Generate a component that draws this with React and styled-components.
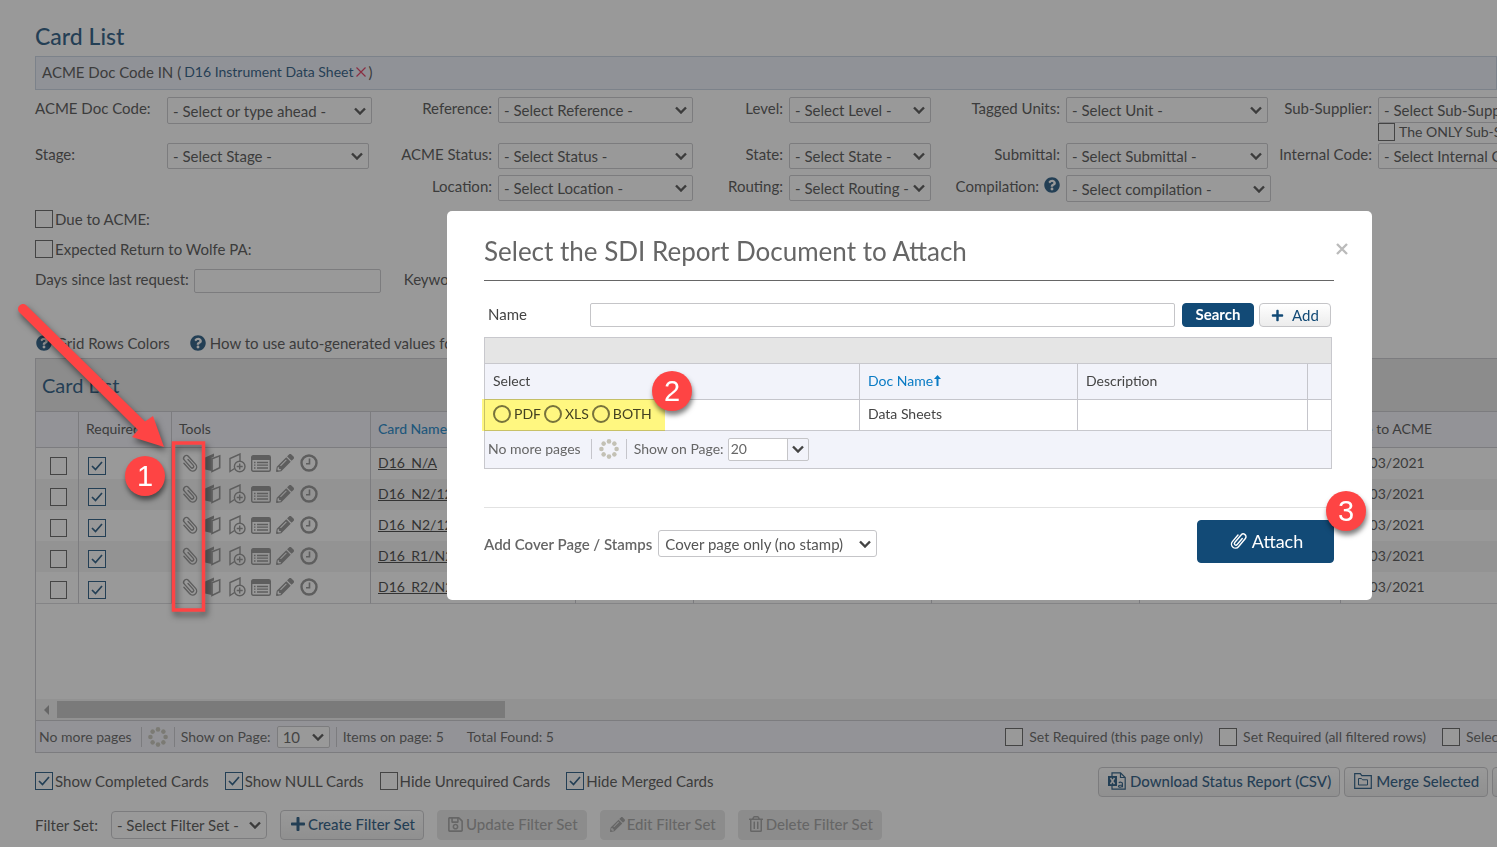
import React from 'react'
import styled, { createGlobalStyle, css } from 'styled-components'
import { FaQuestionCircle, FaPencilAlt, FaPlus, FaRegSave, FaRegTrashAlt } from 'react-icons/fa'

const tools = [PaperclipIcon, BookIcon, MapPlusIcon, ListIcon, FaPencilAlt, ClockIcon]

const cards = [
    { name: 'D16_N/A', date: '03/03/2021' },
    { name: 'D16_N2/12', date: '03/03/2021' },
    { name: 'D16_N2/12', date: '03/03/2021' },
    { name: 'D16_R1/N2', date: '03/03/2021' },
    { name: 'D16_R2/N2', date: '03/03/2021' },
]

function PaperclipIcon({ flip }) {
    return (
        <svg viewBox="0 0 24 24" width="19" height="19" fill="none" stroke="currentColor" strokeWidth="1.8" strokeLinecap="round">
            <g transform={flip ? 'rotate(40 12 12)' : 'rotate(-42 12 12)'}>
                <path d="M7 7v11a5 5 0 0 0 10 0V4.500a3.500 3.500 0 0 0-7 0v12.500a2 2 0 0 0 4 0V7" />
            </g>
        </svg>
    )
}

function BookIcon() {
    return (
        <svg viewBox="0 0 16 20" width="16" height="20">
            <path d="M0 4.500 9 .5v3L6.500 4.800V18L0 16.500z" fill="currentColor" />
            <path d="M7 5.800 14.700 2.800v12L7 18.500z" fill="none" stroke="currentColor" strokeWidth="1.600" />
        </svg>
    )
}

function MapPlusIcon() {
    return (
        <svg viewBox="0 0 17 20" width="17" height="20" fill="none" stroke="currentColor" strokeWidth="1.400">
            <path d="M5.500 15.500 1 18.500V5.500l10-4.500v7" />
            <circle cx="10.700" cy="13.500" r="5.300" />
            <path d="M10.700 10.500v6M7.700 13.500h6" />
        </svg>
    )
}

function ListIcon() {
    return (
        <svg viewBox="0 0 20 17" width="20" height="17">
            <rect x=".7" y=".7" width="18.600" height="15.600" rx="1.500" fill="none" stroke="currentColor" strokeWidth="1.400" />
            <path d="M1 1h18v4H1z" fill="currentColor" />
            <path d="M3 7.500h1.500M3 10.200h1.500M3 13h1.500M6 7.500h11M6 10.200h11M6 13h11" stroke="currentColor" strokeWidth="1.300" />
        </svg>
    )
}

function ClockIcon() {
    return (
        <svg viewBox="0 0 18 18" width="18" height="18" fill="none" stroke="currentColor">
            <circle cx="9" cy="9" r="7.500" strokeWidth="2.400" />
            <path d="M9.500 4.500v5.200H6" strokeWidth="1.600" />
        </svg>
    )
}

function ExcelIcon() {
    return (
        <svg viewBox="0 0 18 18" width="18" height="18" fill="none" stroke="currentColor" strokeWidth="1.200">
            <path d="M4 4V.8h8.500l4.700 4.700v11.700H4V14" />
            <path d="M12.500 1v4.500H17" />
            <path d="M0 4h9v10H0z" fill="currentColor" stroke="none" />
            <path d="m2.500 6 4 6m0-6-4 6" stroke="#f2f2f2" strokeWidth="1.500" />
            <path d="M10.800 10.800c1-.9 3.600-.9 3.600.8v3.600m0-2.200c-2 0-3.900 0-3.900 1.200 0 1.500 3 1.300 3.900-.2" />
        </svg>
    )
}

function FolderIcon() {
    return (
        <svg viewBox="0 0 18 16" width="18" height="16" fill="none" stroke="currentColor" strokeWidth="1.200">
            <path d="M.7 15.300V.7h5.600l1.500 2h9.500v12.600z" />
            <path d="M4.500 12V5.500h3l1 1.300h5V12z" strokeWidth="1" />
        </svg>
    )
}

function Spinner() {
    const dots = [0, 45, 90, 135, 180, 225, 270, 315]
    return (
        <svg viewBox="0 0 20 20" width="20" height="20" fill="#c3c1b5">
            {dots.map(angle => (
                <circle key={angle} cx="10" cy="2.400" r="2.300" transform={`rotate(${angle} 10 10)`} />
            ))}
        </svg>
    )
}

const Dropdown = ({ id, text, ...rest }) => (
    <Select id={id} {...rest}>
        <option>{text}</option>
    </Select>
)

const FilterPanel = () => (
    <Filters>
        <Label htmlFor="docCode">ACME Doc Code:</Label>
        <Dropdown id="docCode" text="- Select or type ahead -" $tall />
        <Label htmlFor="reference" $right>Reference:</Label>
        <Dropdown id="reference" text="- Select Reference -" />
        <Label htmlFor="level" $right>Level:</Label>
        <Dropdown id="level" text="- Select Level -" />
        <Label htmlFor="units" $right>Tagged Units:</Label>
        <Dropdown id="units" text="- Select Unit -" $inset />
        <Label htmlFor="supplier" $right>Sub-Supplier:</Label>
        <WideField>
            <Dropdown id="supplier" text="- Select Sub-Supplier -" />
            <OnlyLabel><Check $small />The ONLY Sub-Supplier</OnlyLabel>
        </WideField>

        <Label htmlFor="stage">Stage:</Label>
        <Dropdown id="stage" text="- Select Stage -" $inset />
        <Label htmlFor="status" $right>ACME Status:</Label>
        <Dropdown id="status" text="- Select Status -" />
        <Label htmlFor="state" $right>State:</Label>
        <Dropdown id="state" text="- Select State -" />
        <Label htmlFor="submittal" $right>Submittal:</Label>
        <Dropdown id="submittal" text="- Select Submittal -" $inset />
        <Label htmlFor="internal" $right>Internal Code:</Label>
        <WideField>
            <Dropdown id="internal" text="- Select Internal Code -" />
        </WideField>

        <LocationLabel htmlFor="location" $right>Location:</LocationLabel>
        <Dropdown id="location" text="- Select Location -" />
        <Label htmlFor="routing" $right>Routing:</Label>
        <Dropdown id="routing" text="- Select Routing -" />
        <Label htmlFor="compilation" $right>Compilation: <HelpIcon /></Label>
        <Dropdown id="compilation" text="- Select compilation -" $tall />
    </Filters>
)

const CardGrid = () => (
    <Panel>
        <PanelTitle>Card List</PanelTitle>
        <PanelBody>
            <CardTable>
                <colgroup>
                    <Col $w={43} /><Col $w={93} /><Col $w={199} /><Col $w={205} /><Col $w={118} />
                    <Col $w={238} /><Col $w={208} /><Col $w={201} /><Col />
                </colgroup>
                <thead>
                    <tr>
                        <th />
                        <th>Required</th>
                        <th>Tools</th>
                        <th><SortLink href="#name" $bold>Card Name(s)</SortLink></th>
                        <th /><th /><th /><th />
                        <th>Due to ACME</th>
                    </tr>
                </thead>
                <tbody>
                    {cards.map((card, i) => (
                        <tr key={i}>
                            <CheckCell><Check aria-label="Select row" $small /></CheckCell>
                            <td><Check aria-label="Required" defaultChecked /></td>
                            <td>
                                <Tools>
                                    {tools.map((Icon, n) => (
                                        <ToolButton key={n} aria-label="Tool"><Icon /></ToolButton>
                                    ))}
                                </Tools>
                            </td>
                            <td><CardLink href="#card">{card.name}</CardLink></td>
                            <td /><td /><td /><td />
                            <td>{card.date}</td>
                        </tr>
                    ))}
                </tbody>
            </CardTable>
        </PanelBody>
        <ScrollBar>
            <ScrollArrow />
            <ScrollThumb />
        </ScrollBar>
        <Pager>
            <PagerLeft>
                <PagerText>No more pages</PagerText>
                <Divider />
                <Spinner />
                <Divider />
                <label htmlFor="pageSize">Show on Page:</label>
                <PageSize id="pageSize"><option>10</option></PageSize>
                <Divider />
                <span>Items on page: 5</span>
                <Total>Total Found: 5</Total>
            </PagerLeft>
            <PagerOption><Check />Set Required (this page only)</PagerOption>
            <Divider />
            <PagerOption><Check />Set Required (all filtered rows)</PagerOption>
            <Divider />
            <PagerOption><Check />Selected</PagerOption>
        </Pager>
    </Panel>
)

const AttachModal = () => (
    <Modal role="dialog" aria-labelledby="modalTitle">
        <ModalHeader>
            <ModalTitle id="modalTitle">Select the SDI Report Document to Attach</ModalTitle>
            <CloseButton aria-label="Close">
                <svg viewBox="0 0 12 12" width="12" height="12" stroke="currentColor" strokeWidth="2.400">
                    <path d="m1 1 10 10M11 1 1 11" />
                </svg>
            </CloseButton>
        </ModalHeader>
        <SearchRow>
            <NameLabel htmlFor="name">Name</NameLabel>
            <TextInput id="name" />
            <SearchButton>Search</SearchButton>
            <AddButton><FaPlus size={13} />Add</AddButton>
        </SearchRow>
        <DocPanel>
            <DocStrip />
            <DocTable>
                <colgroup>
                    <Col $w={375} /><Col $w={218} /><Col $w={230} /><Col />
                </colgroup>
                <thead>
                    <tr>
                        <th>Select</th>
                        <th>
                            <SortLink href="#doc">
                                Doc Name
                                <svg viewBox="0 0 7 11" width="7" height="11" fill="currentColor">
                                    <path d="M3.500 0 7 4H4.500v7h-2V4H0z" />
                                </svg>
                            </SortLink>
                        </th>
                        <th>Description</th>
                        <th />
                    </tr>
                </thead>
                <tbody>
                    <tr>
                        <td>
                            <Formats>
                                <label><Radio name="format" />PDF</label>
                                <label><Radio name="format" />XLS</label>
                                <label><Radio name="format" />BOTH</label>
                                <Highlight />
                            </Formats>
                        </td>
                        <td>Data Sheets</td>
                        <td />
                        <td />
                    </tr>
                </tbody>
            </DocTable>
            <DocPager>
                <PagerText>No more pages</PagerText>
                <Divider />
                <Spinner />
                <Divider />
                <DocSizeLabel>
                    Show on Page:
                    <ComboSelect><option>20</option></ComboSelect>
                </DocSizeLabel>
            </DocPager>
        </DocPanel>
        <ModalFooter>
            <CoverLabel htmlFor="cover">Add Cover Page / Stamps</CoverLabel>
            <CoverSelect id="cover"><option>Cover page only (no stamp)</option></CoverSelect>
            <AttachButton><PaperclipIcon flip />Attach</AttachButton>
        </ModalFooter>
        <Badge $left={205} $top={160}>2</Badge>
        <Badge $left={879} $top={280}>3</Badge>
    </Modal>
)

const App = () => {
    return (
        <Page>
            <GlobalStyle />
            <Heading>Card List</Heading>
            <ActiveFilter>
                ACME Doc Code IN (
                <FilterLink href="#filter">D16 Instrument Data Sheet</FilterLink>
                <RemoveButton aria-label="Remove filter">
                    <svg viewBox="0 0 10 10" width="10" height="10" stroke="currentColor" strokeWidth="1.200">
                        <path d="m.5.5 9 9m0-9-9 9" />
                    </svg>
                </RemoveButton>)
            </ActiveFilter>
            <FilterPanel />
            <CheckRows>
                <CheckLabel><Check />Due to ACME:</CheckLabel>
                <CheckLabel><Check />Expected Return to Wolfe PA:</CheckLabel>
            </CheckRows>
            <DaysRow>
                <label htmlFor="days">Days since last request:</label>
                <DaysInput id="days" />
                <label htmlFor="keyword">Keywords:</label>
                <DaysInput id="keyword" />
            </DaysRow>
            <HelpRow>
                <HelpLink href="#colors"><HelpIcon />Grid Rows Colors</HelpLink>
                <HelpLink href="#values"><HelpIcon />How to use auto-generated values for</HelpLink>
            </HelpRow>
            <CardGrid />
            <OptionsRow>
                <Options>
                    <CheckLabel><Check defaultChecked />Show Completed Cards</CheckLabel>
                    <CheckLabel><Check defaultChecked />Show NULL Cards</CheckLabel>
                    <CheckLabel><Check />Hide Unrequired Cards</CheckLabel>
                    <CheckLabel><Check defaultChecked />Hide Merged Cards</CheckLabel>
                </Options>
                <Button $gap={4}><ExcelIcon />Download Status Report (CSV)</Button>
                <Button $gap={4}><FolderIcon />Merge Selected</Button>
                <Button aria-label="More"><FolderIcon /></Button>
            </OptionsRow>
            <FilterSetRow>
                <label htmlFor="filterSet">Filter Set:</label>
                <FilterSetSelect id="filterSet"><option>- Select Filter Set -</option></FilterSetSelect>
                <Button $gap={2}><FaPlus size={16} />Create Filter Set</Button>
                <Button $gap={2} disabled><FaRegSave size={17} />Update Filter Set</Button>
                <Button $gap={2} disabled><FaPencilAlt />Edit Filter Set</Button>
                <Button $gap={2} disabled><FaRegTrashAlt size={16} />Delete Filter Set</Button>
            </FilterSetRow>
            <Overlay>
                <AttachModal />
            </Overlay>
            <Callouts>
                <svg width="240" height="640" viewBox="0 0 240 640">
                    <path d="M26 305 145 421.500l8-5.500 11 31-32-10 6-7L20 313a5 5 0 0 1 6-8z" fill="#fe4444" />
                    <rect x="173.500" y="443" width="30" height="167" fill="none" stroke="#fe4444" strokeWidth="3.500" />
                </svg>
                <Badge $left={125} $top={456}>1</Badge>
            </Callouts>
        </Page>
    )
}

export default App

const GlobalStyle = createGlobalStyle`
    * {
        box-sizing: border-box;
    }

    body {
        margin: 0;
        background: #fff;
        color: #444;
        font-family: Lato, sans-serif;
        font-size: 15px;
        line-height: 18px;
    }

    button, input, select {
        font: inherit;
        color: inherit;
        margin: 0;
    }

    svg {
        display: block;
        flex: none;
    }
`;

const chevron = `url("data:image/svg+xml,%3Csvg xmlns='http://www.w3.org/2000/svg' viewBox='0 0 12 8'%3E%3Cpath d='M1 1.500l5 5 5-5' fill='none' stroke='%23444' stroke-width='2.400'/%3E%3C/svg%3E")`;

const Page = styled.div`
    position: relative;
    min-height: 100vh;
    padding: 24px 0 7px 35px;
    overflow: hidden;
    white-space: nowrap;
`;

const Heading = styled.h1`
    margin: 0 0 8px;
    font-size: 23px;
    line-height: 24px;
    font-weight: 500;
    color: #124a76;
`;

const ActiveFilter = styled.div`
    display: flex;
    align-items: center;
    height: 34px;
    padding: 0 6px 2px;
    border: 1px solid #c5d0e0;
    background: #edf1fb;
`;

const FilterLink = styled.a`
    margin: 0 3px;
    font-size: 14px;
    color: #124a76;
    text-decoration: none;
`;

const RemoveButton = styled.button`
    margin-right: 2px;
    padding: 0;
    border: 0;
    background: none;
    color: #e0284f;
`;

const Filters = styled.div`
    display: grid;
    grid-template-columns: 132fr 205fr 126fr 195fr 96fr 142fr 135fr 205fr 107fr minmax(0, 119fr);
    grid-template-rows: 46px 32px 35px;
    align-items: start;
    padding-top: 7px;

    > * {
        min-width: 0;
    }
`;

const Label = styled.label`
    padding-top: 2px;

    ${({ $right }) => $right && css`
        display: flex;
        justify-content: flex-end;
        gap: 5px;
        padding-right: 6px;
    `}
`;

const LocationLabel = styled(Label)`
    grid-column: 3;
`;

const HelpIcon = styled(FaQuestionCircle)`
    width: 16px;
    height: 16px;
    color: #124a76;
`;

const Select = styled.select`
    width: ${({ $inset }) => $inset ? 'calc(100% - 3px)' : '100%'};
    height: ${({ $tall }) => $tall ? 27 : 26}px;
    padding: 0 18px 0 5px;
    border: 1px solid #c5c5c8;
    border-radius: 2px;
    appearance: none;
    background: #fff ${chevron} no-repeat right 5px center / 12px 8px;
`;

const WideField = styled.div`
    width: 200px;
`;

const Check = styled.input.attrs({ type: 'checkbox' })`
    flex: none;
    display: block;
    width: ${({ $small }) => $small ? 17 : 18}px;
    height: 18px;
    border: 1px solid #555;
    appearance: none;
    background: #fff;

    &:checked {
        border-color: #124a76;
        background: #fff url("data:image/svg+xml,%3Csvg xmlns='http://www.w3.org/2000/svg' viewBox='0 0 12 10'%3E%3Cpath d='M1 5l3.500 3.500L11 1' fill='none' stroke='%23124a76' stroke-width='1.700'/%3E%3C/svg%3E") no-repeat center / 12px 10px;
    }
`;

const Radio = styled.input.attrs({ type: 'radio' })`
    width: 18px;
    height: 18px;
    border: 2px solid #777;
    border-radius: 50%;
    appearance: none;
    background: #fff;
`;

const CheckLabel = styled.label`
    display: flex;
    align-items: center;
    gap: 2px;
`;

const OnlyLabel = styled(CheckLabel)`
    font-size: 14px;
    gap: 4px;
`;

const CheckRows = styled.div`
    display: grid;
    gap: 12px;
    padding-bottom: 10px;
`;

const DaysRow = styled.div`
    display: flex;
    align-items: center;
    gap: 5px;
    height: 25px;

    label {
        padding-bottom: 4px;
    }
`;

const TextInput = styled.input`
    flex: 1;
    min-width: 0;
    height: 24px;
    padding: 0 5px;
    border: 1px solid #c5c5c8;
    border-radius: 2px;
    background: #fff;
`;

const DaysInput = styled(TextInput)`
    flex: 0 0 187px;
    margin-right: 18px;
`;

const HelpRow = styled.div`
    display: flex;
    gap: 20px;
    padding: 41px 0 6px 1px;
`;

const HelpLink = styled.a`
    display: flex;
    align-items: center;
    gap: 4px;
    color: inherit;
    text-decoration: none;
`;

const Panel = styled.section`
    border: 1px solid #c5c5cb;
    border-right: 0;
`;

const PanelTitle = styled.h2`
    margin: 0;
    padding: 14px 6px;
    border-bottom: 1px solid #c5c5cb;
    background: #e5e5e5;
    font-size: 20px;
    line-height: 24px;
    font-weight: 400;
    color: #124a76;
`;

const PanelBody = styled.div`
    min-height: 287px;
`;

const Col = styled.col`
    width: ${({ $w }) => $w ? `${$w}px` : 'auto'};
`;

const DataTable = styled.table`
    width: 100%;
    table-layout: fixed;
    border-collapse: separate;
    border-spacing: 0;
    font-size: 14px;

    th, td {
        padding: 0 8px 2px 7px;
        border-right: 1px solid #c5c5cb;
        text-align: left;
        font-weight: 400;
    }

    th:last-child, td:last-child {
        border-right: 0;
    }

    th {
        height: 36px;
        border-bottom: 1px solid #c5c5cb;
        background: #f2f3fa;
    }
`;

const CardTable = styled(DataTable)`
    tbody td {
        height: 31px;
        padding-bottom: 1px;
    }

    tbody tr:nth-child(even) td {
        background: #f2f2f2;
    }

    tbody tr:last-child td {
        height: 32px;
        border-bottom: 1px solid #d5d5d8;
    }

    td:last-child, th:last-child {
        padding-left: 6px;
    }
`;

const CheckCell = styled.td`
    && {
        padding: 5px 0 0 14px;
    }

    + td {
        padding-top: 6px;
        padding-left: 9px;
    }
`;

const SortLink = styled.a`
    display: inline-flex;
    align-items: center;
    gap: 1px;
    font-weight: ${({ $bold }) => $bold ? 500 : 400};
    color: #0a7bc4;
    text-decoration: none;
`;

const CardLink = styled.a`
    color: #333;
`;

const Tools = styled.div`
    display: flex;
    align-items: center;
    gap: 4px;
`;

const ToolButton = styled.button`
    display: flex;
    align-items: center;
    justify-content: center;
    width: 20px;
    height: 20px;
    padding: 0;
    border: 0;
    background: none;
    color: #888;
    font-size: 18px;
`;

const ScrollBar = styled.div`
    display: flex;
    align-items: center;
    gap: 7px;
    height: 21px;
    padding-left: 8px;
    background: #f0f0f0;
`;

const ScrollArrow = styled.div`
    border: 5px solid transparent;
    border-left: 0;
    border-right-color: #999;
    margin-right: 1px;
`;

const ScrollThumb = styled.div`
    width: 448px;
    height: 17px;
    background: #c1c1c1;
`;

const Pager = styled.div`
    display: flex;
    align-items: center;
    gap: 6px;
    height: 32px;
    padding-left: 3px;
    border-top: 1px solid #c5c5cb;
    background: #f2f3fa;
    font-size: 14px;
    color: #555;
`;

const PagerLeft = styled.div`
    flex: 0 0 66%;
    display: flex;
    align-items: center;
    gap: 6px;
    margin-right: -2px;
`;

const PagerText = styled.span`
    margin-right: 3px;
`;

const Divider = styled.span`
    width: 1px;
    height: 20px;
    background: #c5c5cb;
`;

const Total = styled.span`
    margin-left: 17px;
`;

const PageSize = styled(Select)`
    width: 53px;
    height: 22px;
    font-size: 15px;
`;

const PagerOption = styled.label`
    display: flex;
    align-items: center;
    gap: 6px;
    padding-right: 4px;
`;

const OptionsRow = styled.div`
    display: flex;
    align-items: center;
    gap: 4px;
    padding-top: 14px;
`;

const Options = styled.div`
    flex: 0 0 1059px;
    display: flex;
    gap: 16px;
    padding-bottom: 2px;
`;

const Button = styled.button`
    flex: none;
    display: flex;
    align-items: center;
    gap: ${({ $gap }) => $gap || 0}px;
    height: 30px;
    padding: 0 8px 2px 9px;
    border: 1px solid #c5c5c8;
    border-radius: 4px;
    background: linear-gradient(#fff, #ececec);
    color: #124a76;
    font-weight: 500;

    &:disabled {
        border-color: #e5e5e5;
        background: #e5e5e5;
        color: #999;
    }
`;

const FilterSetRow = styled.div`
    display: flex;
    align-items: center;
    gap: 13px;
    padding-top: 13px;
`;

const FilterSetSelect = styled(Select)`
    width: 156px;
    height: 28px;
    border-radius: 4px;
`;

const Overlay = styled.div`
    position: fixed;
    inset: 0;
    display: flex;
    align-items: flex-start;
    justify-content: center;
    padding: 211px 0 0 322px;
    background: rgba(51, 51, 51, .5);
`;

const Modal = styled.div`
    position: relative;
    width: 925px;
    padding: 24px 38px 37px 37px;
    border-radius: 5px;
    background: #fff;
`;

const ModalHeader = styled.div`
    display: flex;
    justify-content: space-between;
    padding-bottom: 12px;
    border-bottom: 1px solid #666;
`;

const ModalTitle = styled.h2`
    margin: 0;
    font-size: 26px;
    line-height: 33px;
    font-weight: 400;
    color: #666;
`;

const CloseButton = styled.button`
    height: 12px;
    margin: 8px -14px 0 0;
    padding: 0;
    border: 0;
    background: none;
    color: #bbb;
`;

const SearchRow = styled.div`
    display: flex;
    align-items: center;
    padding: 22px 3px 10px 4px;
`;

const NameLabel = styled.label`
    width: 102px;
    padding-bottom: 2px;
`;

const SearchButton = styled(Button)`
    justify-content: center;
    width: 72px;
    height: 24px;
    margin: 0 5px 0 7px;
    padding: 0 0 2px;
    border-color: #124a76;
    background: #124a76;
    color: #fff;
    font-weight: 700;
`;

const AddButton = styled(Button)`
    justify-content: center;
    gap: 8px;
    width: 72px;
    height: 24px;
    padding: 0;
    font-weight: 400;
`;

const DocPanel = styled.div`
    margin-right: 2px;
    border: 1px solid #c8c8cd;
    font-size: 14px;
`;

const DocStrip = styled.div`
    height: 26px;
    border-bottom: 1px solid #c8c8cd;
    background: #e5e5e5;
`;

const DocTable = styled(DataTable)`
    td {
        height: 31px;
        border-bottom: 1px solid #c8c8cd;
    }

    th, td {
        padding-left: 8px;
    }
`;

const Formats = styled.div`
    position: relative;
    display: flex;
    gap: 3px;

    label {
        display: flex;
        align-items: center;
        gap: 3px;
    }
`;

const Highlight = styled.div`
    position: absolute;
    top: -6px;
    left: -11px;
    width: 183px;
    height: 32px;
    background: #fff780;
    mix-blend-mode: multiply;
    pointer-events: none;
`;

const DocPager = styled.div`
    display: flex;
    align-items: center;
    gap: 7px;
    height: 37px;
    padding: 0 0 1px 3px;
    background: #f2f3fa;
    color: #666;
`;

const DocSizeLabel = styled.label`
    display: flex;
    align-items: center;
    gap: 4px;
`;

const ComboSelect = styled(Select)`
    width: 81px;
    height: 23px;
    padding-left: 2px;
    background: ${chevron} no-repeat right 4px center / 12px 8px, linear-gradient(90deg, #fff 58px, #c5c5c8 58px 59px, #f2f3fa 59px);
`;

const ModalFooter = styled.div`
    display: flex;
    align-items: center;
    margin-top: 38px;
    padding-top: 12px;
    border-top: 1px solid #e2e2e2;
`;

const CoverLabel = styled.label`
    padding-top: 4px;
    font-weight: 600;
    color: #666;
`;

const CoverSelect = styled(Select)`
    width: 219px;
    height: 27px;
    margin: 4px auto 0 6px;
    padding-left: 6px;
    border-radius: 3px;
    color: #555;
`;

const AttachButton = styled(Button)`
    justify-content: center;
    gap: 4px;
    width: 137px;
    height: 43px;
    border-color: #124a76;
    background: #124a76;
    color: #fff;
    font-size: 18px;
    font-weight: 400;
`;

const Callouts = styled.div`
    position: absolute;
    top: 0;
    left: 0;
    pointer-events: none;

    svg {
        filter: drop-shadow(2px 4px 3px rgba(0, 0, 0, .5));
    }
`;

const Badge = styled.span`
    position: absolute;
    left: ${({ $left }) => $left}px;
    top: ${({ $top }) => $top}px;
    width: 40px;
    height: 40px;
    border-radius: 50%;
    background: #fe4444;
    box-shadow: 1px 4px 5px rgba(0, 0, 0, .5);
    color: #fff;
    font-family: 'Liberation Sans', Arial, sans-serif;
    font-size: 29px;
    line-height: 40px;
    text-align: center;
`;
